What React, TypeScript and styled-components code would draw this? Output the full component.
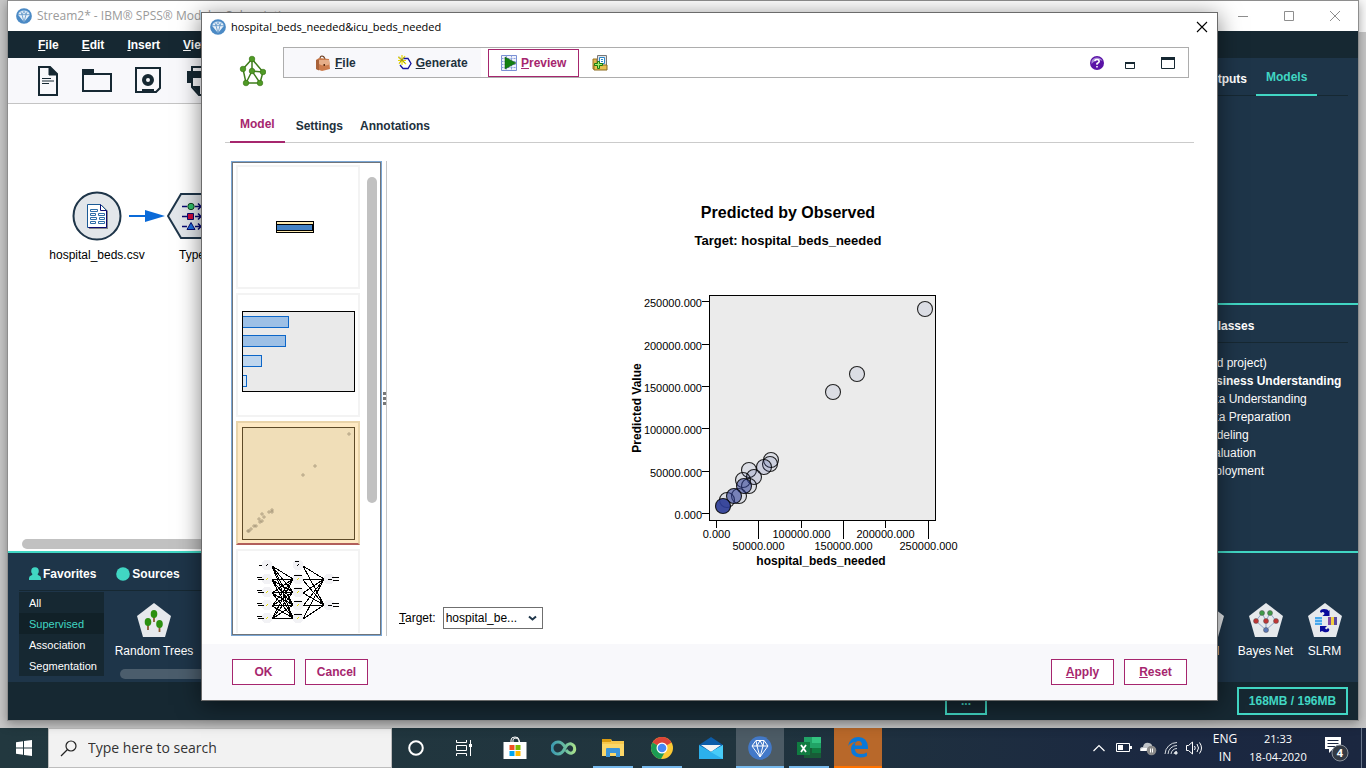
import React from "react";
import styled, { createGlobalStyle, css } from "styled-components";

const c = {
  navy: "#1e3549",
  ink: "#162832",
  inkDeep: "#112128",
  teal: "#41d6c3",
  magenta: "#a6266e",
  panel: "#f8f8fb",
  text: "#22313d",
};
const ui = `"Liberation Sans", Arial, sans-serif`;
const sys = `"Open Sans", "Noto Sans", sans-serif`;

const Global = createGlobalStyle`
  *, *::before, *::after { box-sizing: border-box; }
  body { margin: 0; font-family: ${ui}; font-size: 12px; line-height: 14px; color: #000; }
  button, input, select { font: inherit; color: inherit; margin: 0; }
  button { border: 0; background: none; padding: 0; white-space: nowrap; }
  svg { display: block; flex: none; }
  h1, h2, p, ul { margin: 0; padding: 0; font: inherit; list-style: none; }
`;

const Desktop = styled.div`
  min-height: 100vh;
  display: flex;
  flex-direction: column;
  overflow: hidden;
`;
const Stage = styled.div`
  flex: 1;
  position: relative;
  display: flex;
  background: linear-gradient(#fafafa, #fafafa) right top / 8px 32px no-repeat, #c8c8c8;
`;

/* ---------- main window ---------- */
const MainWindow = styled.div`
  flex: 1;
  min-width: 0;
  margin: 0 7px 7px;
  border: 1px solid #8e8e8e;
  display: flex;
  flex-direction: column;
  background: #fff;
  box-shadow: 0 3px 10px rgba(0, 0, 0, 0.35);
`;
const TitleBar = styled.header<{ $dim?: boolean }>`
  height: ${(p) => (p.$dim ? 30 : 28)}px;
  flex: none;
  display: flex;
  align-items: center;
  gap: 5px;
  padding: 0 ${(p) => (p.$dim ? 14 : 9)}px 0 8px;
  font-family: ${sys};
  font-size: ${(p) => (p.$dim ? 12 : 11)}px;
  line-height: 16px;
  color: ${(p) => (p.$dim ? "#9a9a9a" : "#000")};
  background: #fff;
`;
const TitleText = styled.h1`
  flex: 1;
  white-space: nowrap;
`;
const WindowButtons = styled.div`
  display: flex;
  gap: 32px;
  padding-right: 3px;
`;
const MenuBar = styled.nav`
  height: 27px;
  flex: none;
  display: flex;
  align-items: center;
  gap: 23px;
  padding-left: 30px;
  background: ${c.ink};
  color: #fff;
  font-weight: bold;
  button { font-weight: bold; }
`;
const Work = styled.div`
  flex: 1;
  min-height: 0;
  display: flex;
`;
const CanvasColumn = styled.section`
  flex: 1;
  min-width: 0;
  display: flex;
  flex-direction: column;
`;
const Tools = styled.div`
  height: 46px;
  flex: none;
  display: flex;
  align-items: center;
  gap: 23px;
  padding-left: 29px;
  background: ${c.panel};
  border-bottom: 1px solid #c4c4c4;
`;
const Canvas = styled.div`
  flex: 1;
  position: relative;
`;
const CanvasNode = styled.div<{ $x: number; $y: number }>`
  position: absolute;
  left: ${(p) => p.$x}px;
  top: ${(p) => p.$y}px;
  width: 120px;
  display: flex;
  flex-direction: column;
  align-items: center;
  gap: 7px;
`;
const Arrow = styled.svg`
  position: absolute;
  left: 120px;
  top: 105px;
`;
const ScrollThumb = styled.div<{ $tone: string }>`
  height: 10px;
  border-radius: 5px;
  background: ${(p) => p.$tone};
`;
const CanvasScroll = styled.div`
  padding: 0 14px 2px;
`;

const SidePanel = styled.aside`
  width: 190px;
  flex: none;
  display: flex;
  flex-direction: column;
  background: ${c.navy};
  color: #fff;
`;
const SideTop = styled.div`
  height: 245px;
  flex: none;
`;
const SideTabs = styled.div<{ $pad: number }>`
  display: flex;
  align-items: flex-end;
  height: 38px;
  margin-right: 10px;
  padding-left: ${(p) => p.$pad}px;
  box-shadow: inset 0 -1px 0 ${c.ink};
`;
const SideTab = styled.button<{ $on?: boolean }>`
  font-weight: bold;
  padding: 0 9px 10px 0;
  ${(p) =>
    p.$on &&
    css`
      padding: 0 10px 10px;
      color: ${c.teal};
      border-bottom: 2px solid ${c.teal};
    `}
`;
const SideBottom = styled.div`
  flex: 1;
  border-top: 2px solid ${c.teal};
`;
const Tree = styled.ul`
  padding: 11px 0 0 6px;
  line-height: 18px;
`;
const TreeItem = styled.li<{ $bold?: boolean; $root?: boolean }>`
  padding-left: ${(p) => (p.$root ? 0 : 26)}px;
  font-weight: ${(p) => (p.$bold ? "bold" : "normal")};
  white-space: nowrap;
`;

const Palette = styled.section`
  flex: none;
  border-top: 2px solid ${c.teal};
  background: ${c.navy};
  color: #fff;
  padding: 0 4px 6px 11px;
`;
const PaletteTabs = styled.div`
  height: 38px;
  width: 80%;
  display: flex;
  align-items: center;
  gap: 20px;
  padding: 4px 0 0 10px;
  border-bottom: 1px solid ${c.ink};
`;
const PaletteTab = styled.button`
  display: flex;
  align-items: center;
  gap: 2px;
  font-weight: bold;
`;
const PaletteBody = styled.div`
  display: flex;
  margin-top: 1px;
  gap: 8px;
`;
const Groups = styled.div`
  width: 85px;
  flex: none;
  display: flex;
  flex-direction: column;
  background: ${c.ink};
`;
const Group = styled.button<{ $on?: boolean }>`
  height: 21px;
  padding-left: 10px;
  text-align: left;
  font-size: 11px;
  color: ${(p) => (p.$on ? c.teal : "#fff")};
  background: ${(p) => (p.$on ? c.inkDeep : "transparent")};
`;
const NodeArea = styled.div`
  flex: 1;
  display: flex;
  flex-direction: column;
  justify-content: space-between;
  padding: 10px 0 0;
`;
const NodeStrip = styled.div`
  display: flex;
`;
const PaletteNode = styled.button<{ $w: number; $push?: boolean }>`
  width: ${(p) => p.$w}px;
  margin-left: ${(p) => (p.$push ? "auto" : "0")};
  display: flex;
  flex-direction: column;
  align-items: center;
  gap: 6px;
  font-size: 12px;
`;
const NodeScroll = styled.div`
  width: 80%;
  padding: 0 8px;
  margin-bottom: -3px;
`;
const StatusBar = styled.footer`
  height: 38px;
  flex: none;
  display: flex;
  align-items: center;
  justify-content: flex-end;
  gap: 250px;
  padding-right: 10px;
  background: ${c.ink};
`;
const StatusButton = styled.button<{ $w: number }>`
  width: ${(p) => p.$w}px;
  height: 28px;
  border: 2px solid ${c.teal};
  color: ${c.teal};
  font-weight: bold;
`;

/* ---------- dialog ---------- */
const Dialog = styled.div`
  position: absolute;
  top: 12px;
  left: 201px;
  right: 148px;
  bottom: 27px;
  display: flex;
  flex-direction: column;
  background: #fff;
  border: 1px solid #6b6b6b;
  box-shadow: 0 4px 22px rgba(0, 0, 0, 0.5);
`;
const DialogHead = styled.div`
  height: 62px;
  flex: none;
  display: flex;
  align-items: flex-start;
  gap: 17px;
  padding: 6px 28px 0 37px;
  > svg { margin-top: 8px; }
`;
const ToolBar = styled.div`
  flex: 1;
  height: 31px;
  display: flex;
  align-items: center;
  border: 1px solid #adadad;
  color: ${c.text};
`;
const MenuGroup = styled.div`
  align-self: stretch;
  width: 197px;
  display: flex;
  align-items: center;
  gap: 42px;
  padding-left: 31px;
  background: ${c.panel};
`;
const ToolButton = styled.button<{ $primary?: boolean }>`
  display: flex;
  align-items: center;
  gap: 4px;
  font-weight: bold;
  ${(p) =>
    p.$primary &&
    css`
      height: 28px;
      margin: 0 13px 0 7px;
      padding: 0 12px;
      border: 1px solid ${c.magenta};
      color: ${c.magenta};
    `}
`;
const ToolEnd = styled.div`
  margin-left: auto;
  padding-right: 13px;
  display: flex;
  align-items: center;
`;
const Tabs = styled.div`
  height: 40px;
  flex: none;
  display: flex;
  align-items: flex-end;
  gap: 5px;
  margin: 0 23px;
  padding-left: 5px;
  box-shadow: inset 0 -1px 0 #cbcbcb;
`;
const Tab = styled.button<{ $on?: boolean }>`
  padding: 0 6px 10px;
  font-weight: bold;
  color: ${c.text};
  ${(p) =>
    p.$on &&
    css`
      padding: 0 10px 10px;
      color: ${c.magenta};
      border-bottom: 2px solid ${c.magenta};
    `}
`;
const Split = styled.div`
  flex: 1;
  min-height: 0;
  display: flex;
  margin: 18px 28px 8px 29px;
`;
const Thumbs = styled.div`
  width: 151px;
  flex: none;
  display: flex;
  gap: 7px;
  padding: 2px 3px;
  overflow: hidden;
  border: 1px solid #7aa6d4;
  box-shadow: inset 0 0 0 1px #6f747a;
`;
const ThumbList = styled.div`
  display: flex;
  flex-direction: column;
  gap: 4px;
  padding: 1px 0 0 1px;
  height: 100%;
  overflow: hidden;
`;
const Thumb = styled.button<{ $on?: boolean }>`
  flex: none;
  width: 124px;
  height: 124px;
  border: 2px solid ${(p) => (p.$on ? "#e9d4aa" : "#f3f3f3")};
  border-bottom-color: ${(p) => (p.$on ? "#b25e5a" : "#f3f3f3")};
  background: ${(p) => (p.$on ? "#fee9c3" : "#fff")};
`;
const VThumb = styled.div`
  width: 10px;
  height: 326px;
  margin-top: 13px;
  border-radius: 5px;
  background: #c1c1c1;
`;
const Divider = styled.div`
  width: 5px;
  flex: none;
  display: flex;
  flex-direction: column;
  align-items: flex-start;
  justify-content: center;
  gap: 2px;
  padding-left: 1px;
  border-right: 1px solid #c6c6c6;
  i { width: 3px; height: 3px; background: #777; }
`;
const Viewer = styled.section`
  flex: 1;
  min-width: 0;
  display: flex;
  flex-direction: column;
`;
const ChartTitle = styled.h2`
  margin-top: 43px;
  text-align: center;
  font-size: 16px;
  line-height: 18px;
  font-weight: bold;
`;
const ChartSub = styled.p`
  margin-top: 11px;
  text-align: center;
  font-size: 13px;
  line-height: 16px;
  font-weight: bold;
`;
const ChartSvg = styled.svg`
  align-self: center;
  margin-top: 36px;
  font-family: ${ui};
  font-size: 11px;
`;
const AxisTitle = styled.text`
  font-size: 12px;
  font-weight: bold;
  text-anchor: middle;
`;
const TargetRow = styled.div`
  margin-top: auto;
  padding: 0 0 7px 12px;
  display: flex;
  align-items: center;
  gap: 7px;
`;
const SelectBox = styled.div`
  display: grid;
  width: 100px;
  > * { grid-area: 1 / 1; }
  svg { align-self: center; justify-self: end; margin-right: 6px; pointer-events: none; }
`;
const Select = styled.select`
  appearance: none;
  height: 22px;
  padding: 0 2px;
  border: 1px solid #6f6f6f;
  border-radius: 0;
  background: #fff;
`;
const DialogFoot = styled.footer`
  height: 56px;
  flex: none;
  display: flex;
  align-items: center;
  gap: 10px;
  padding: 0 30px;
  background: ${c.panel};
`;
const FootButton = styled.button<{ $push?: boolean }>`
  width: 63px;
  height: 26px;
  margin-left: ${(p) => (p.$push ? "auto" : "0")};
  border: 1px solid ${c.magenta};
  background: #fff;
  color: ${c.magenta};
  font-weight: bold;
`;

/* ---------- taskbar ---------- */
const TaskBar = styled.footer`
  height: 40px;
  flex: none;
  display: flex;
  background: linear-gradient(90deg, #22383f, #20343e 55%, #1b2841 85%, #1b2740);
  color: #fff;
  font-family: ${sys};
`;
const TaskButton = styled.button<{ $bg?: string; $line?: string; $lineW?: number }>`
  width: 48px;
  display: grid;
  place-items: center;
  background: ${(p) =>
    p.$line
      ? `linear-gradient(${p.$line}, ${p.$line}) center bottom / ${p.$lineW ?? 40}px 2px no-repeat, ${p.$bg ?? "transparent"}`
      : "none"};
`;
const Search = styled.label`
  width: 344px;
  display: flex;
  align-items: center;
  gap: 11px;
  padding-left: 11px;
  background: #f2f2f2;
  border: 1px solid #bdbdbd;
`;
const SearchInput = styled.input`
  flex: 1;
  min-width: 0;
  border: 0;
  padding: 0;
  outline: 0;
  background: none;
  font-size: 14px;
  line-height: 20px;
  color: #333;
  &::placeholder { color: #333; opacity: 1; }
`;
const Apps = styled.div`
  display: flex;
  gap: 1px;
  margin-left: 3px;
`;
const Tray = styled.div`
  margin-left: auto;
  display: flex;
  align-items: center;
  gap: 7px;
  font-size: 12px;
  line-height: 18px;
`;
const TrayText = styled.div<{ $w: number; $small?: boolean }>`
  width: ${(p) => p.$w}px;
  text-align: center;
  font-size: ${(p) => (p.$small ? 11 : 12)}px;
`;
const ShowDesktop = styled.div`
  width: 5px;
  align-self: stretch;
  border-left: 1px solid #68758a;
`;

/* ---------- drawings ---------- */
const Gem = ({ size = 16, flat }: { size?: number; flat?: boolean }) => (
  <svg width={size} height={size} viewBox="0 0 24 24">
    <circle cx="12" cy="12" r="11.8" fill={flat ? "#4379c8" : "#4b8ac5"} />
    {!flat && <path d="M3 9A10 10 0 0 1 21 9Q12 3 3 9" fill="#9cc3e6" />}
    {flat ? (
      <path d="M8 4.5h8l4 5.5-8 11-8-11zM4 10h16M8 4.5 9 10l3 11 3-11 1-5.500M9 10l3-5.500 3 5.500" fill="none" stroke="#fff" strokeWidth="1" />
    ) : (
      <>
        <path d="M7 5h10l4 5-9 11L3 10z" fill="#e8f1f9" />
        <path d="M3 10h18M9 10l3 11 3-11-3-5zM7 5l2 5M17 5l-2 5" fill="none" stroke="#5c93c6" strokeWidth="1.2" />
      </>
    )}
  </svg>
);

const WinControls = () => (
  <WindowButtons>
    <button aria-label="Minimize">
      <svg width="12" height="12" viewBox="0 0 12 12"><path d="M1 6.500h10" stroke="#8e8e8e" /></svg>
    </button>
    <button aria-label="Maximize">
      <svg width="16" height="12" viewBox="0 0 16 12"><path d="M3.500 1.500h9v9h-9z" fill="none" stroke="#8e8e8e" /></svg>
    </button>
    <button aria-label="Close">
      <svg width="12" height="12" viewBox="0 0 12 12"><path d="m1 1 10 10M11 1 1 11" stroke="#8e8e8e" /></svg>
    </button>
  </WindowButtons>
);

const NewDoc = () => (
  <svg width="22" height="32" viewBox="0 0 22 32" fill="none" stroke={c.ink}>
    <path d="M2 2h11l7 7v21H2z" strokeWidth="2" />
    <path d="M12 2v8h8z" fill={c.ink} />
    <path d="M5 13.500h9M5 16h12M5 18.500h7" />
  </svg>
);
const Folder = () => (
  <svg width="30" height="24" viewBox="0 0 30 24">
    <path d="M1 5h28v17H1z" fill="none" stroke={c.ink} strokeWidth="2" />
    <path d="M0 0h12v5H0z" fill={c.ink} />
  </svg>
);
const Disk = () => (
  <svg width="28" height="28" viewBox="0 0 28 28">
    <path d="M1 1h24v20l-4 4H1z" fill="none" stroke={c.ink} strokeWidth="2" />
    <circle cx="13" cy="13" r="4" fill="none" stroke={c.ink} strokeWidth="4" />
    <path d="M7 22h12v3H7z" fill={c.ink} />
  </svg>
);
const Printer = () => (
  <svg width="30" height="32" viewBox="0 0 30 32">
    <path d="M6 9V2h18v7" fill="none" stroke={c.ink} strokeWidth="2" />
    <path d="M1 6h28v12h-4v-5H5v5H1z" fill={c.ink} />
    <path d="M6 13v9l7 8h12V13" fill="none" stroke={c.ink} strokeWidth="2" />
    <path d="M6 21h8v9z" fill={c.ink} />
  </svg>
);

const SourceNode = () => (
  <svg width="50" height="50" viewBox="0 0 50 50">
    <circle cx="25" cy="25" r="23.500" fill="#e2e6ea" stroke={c.navy} strokeWidth="2" />
    <path d="M17 14h13l6 6v18H17z" fill="#888" />
    <path d="M15.500 13.500h13l6 6v17h-19z" fill="#fff" stroke="#1a5a96" />
    <path d="M28.500 13.500v6h6v17h-18" fill="none" stroke="#0a0a70" />
    <path d="M18.500 18.500h7v2h-7zM18.500 22.500h5v2h-5zM26.500 22.500h6v2h-6zM18.500 26.500h6v2h-6zM27.500 26.500h5v2h-5zM18.500 30.500h5v2h-5zM26.500 30.500h6v2h-6z" fill="none" stroke="#2f6ea8" />
  </svg>
);
const TypeNode = () => (
  <svg width="50" height="50" viewBox="0 0 50 50">
    <path d="M1 25 14 3h24l11 22-11 22H14z" fill="#e2e6ea" stroke={c.navy} strokeWidth="2" />
    <path d="M15 15.500h5M28 15.500h6m-3-3 3 3-3 3M15 25.500h5M28 25.500h6m-3-3 3 3-3 3M15 35.500h5M28 35.500h6m-3-3 3 3-3 3" fill="none" stroke="#0a0a70" strokeWidth="1.500" />
    <circle cx="24" cy="15.500" r="3.200" fill="#2fc06a" stroke="#10401c" />
    <path d="M20.500 22.500h6v6h-6z" fill="#d00a3c" stroke="#0a0a70" />
    <path d="m24 31.500 4 7h-8z" fill="#1c6fe0" stroke="#0a0a70" />
  </svg>
);

const Pentagon = ({ children }: { children: React.ReactNode }) => (
  <svg width="36" height="36" viewBox="0 0 36 36">
    <path d="M18 1 35 14 29 35H7L1 14z" fill="#e6e9ec" />
    {children}
  </svg>
);
const Trees = () => (
  <Pentagon>
    {[[18, 12], [12, 20], [23.5, 22]].map(([x, y]) => (
      <g key={x}>
        <path d={`M${x} ${y}v8`} stroke="#8a5a30" strokeWidth="1.800" />
        <ellipse cx={x} cy={y} rx="3.300" ry="4" fill="#2c9010" />
      </g>
    ))}
  </Pentagon>
);
const Bayes = () => (
  <Pentagon>
    <path d="M14 11 8 19l10 9 10-9-6-8-4 8-4-8M18 19v9" fill="none" stroke="#8fa5c8" />
    <g stroke="#555" strokeWidth=".5">
      <circle cx="14" cy="11" r="2.500" fill="#3f9a48" /><circle cx="22" cy="11" r="2.500" fill="#3f9a48" />
      <circle cx="8" cy="19" r="2.500" fill="#c03434" /><circle cx="18" cy="19" r="2.500" fill="#c03434" /><circle cx="28" cy="19" r="2.500" fill="#c03434" />
      <circle cx="18" cy="28" r="2.500" fill="#5876b8" />
    </g>
  </Pentagon>
);
const Slrm = () => (
  <Pentagon>
    <path d="M8 15h7v8H8z" fill="#48a8ec" />
    <path d="M8 17.500h7M8 20.500h7" stroke="#a5d6fa" />
    <path d="M21 15h3v8h-3z" fill="#8048a8" /><path d="M24 15h3v8h-3z" fill="#f0d040" /><path d="M27 15h3v8h-3z" fill="#5a48a0" />
    <path d="M13 10q0-3 4-3 4 0 4.500 2l1-1v6h-7l2-2q0-2-2-2-1 0-1 1zM13 24h7l-2 2q1 2 2 1l1-1q2 1 1 3-2 2-5 1l-2-1-2 1z" fill="#0a0a9a" />
  </Pentagon>
);
const Plain = () => (
  <Pentagon><path d="M9 22 27 14" stroke="#888" /></Pentagon>
);

const NetIcon = () => {
  const p = [[13, 4], [4, 14], [24, 17], [13, 16], [7, 28], [21, 28]];
  return (
    <svg width="27" height="32" viewBox="0 0 27 32">
      <path d="M13 4 4 14l3 14h14l3-11zM13 4v12M13 16l11 1M13 16 7 28M13 16l8 12" fill="none" stroke="#3f7d1c" strokeWidth="1.500" />
      {p.map(([x, y]) => (
        <circle key={`${x}-${y}`} cx={x} cy={y} r="2.800" fill="#4f9a26" stroke="#34700f" strokeWidth=".6" />
      ))}
    </svg>
  );
};
const Bag = () => (
  <svg width="16" height="16" viewBox="0 0 16 16">
    <path d="M5 4Q5 1 7 1t3 3" fill="none" stroke="#6b3a1c" strokeWidth="1.200" />
    <path d="M1 5 4 3l10 1 1 10-8 2-6-2z" fill="#cc7c4c" />
    <path d="M4 5h10l1 4q-6 3-11 0z" fill="#e6ae88" />
    <path d="M1 5 4 4.500v11L1 14z" fill="#a8623a" />
    <path d="M8.500 9h1.500v2H8.500z" fill="#5b2c10" />
  </svg>
);
const GenIcon = () => (
  <svg width="14" height="16" viewBox="0 0 14 16">
    <path d="M5 3.500h5l3 5-3 5H5l-3-3.500" fill="#fff" stroke="#1414a0" strokeWidth="1.300" />
    <path d="M0 2l8 7M7 1 1 9M4 0v10M0 5.500h8" stroke="#e8d800" strokeWidth="1.200" />
    <path d="M1 1.500 7 8M6.500 2 1.500 7.500" stroke="#555" strokeWidth=".6" />
  </svg>
);
const PreviewIcon = () => (
  <svg width="16" height="16" viewBox="0 0 16 16">
    <path d="M.5.500h15v15H.5z" fill="#eef2fc" stroke="#7a90d4" />
    <path d="M.5 3.500h15M.5 6.500h15M.5 9.500h15M.5 12.500h15M5.500.500v15M10.500.500v15" stroke="#8ca0dc" strokeDasharray="2 1" />
    <path d="M4 2v12l11-6z" fill="#128012" stroke="#0a500a" strokeWidth=".5" />
  </svg>
);
const AddIcon = () => (
  <svg width="17" height="17" viewBox="0 0 17 17">
    <path d="M1 5h4v10H1z" fill="#e0b450" stroke="#9a7420" />
    <path d="M5.500 1.500h9V15h-9z" fill="#e4e4e8" stroke="#777" />
    <path d="M7.500 3.500h5v6h-5z" fill="#fff" stroke="#2a88c8" />
    <path d="M9 5.500h2M9 7.500h2" stroke="#2a88c8" />
    <path d="M2 11h13v5H2z" fill="#e8c050" stroke="#8a6a1c" />
    <path d="M5.500 7.500h2v2h3v2h-3v3h-2v-3h-3v-2h3z" fill="#a0f070" stroke="#1c7a10" />
  </svg>
);
const Help = () => (
  <svg width="14" height="14" viewBox="0 0 14 14">
    <circle cx="7" cy="7" r="7" fill="#5a12a6" />
    <path d="M1.500 5A6 6 0 0 1 12.500 5Q7 2 1.500 8z" fill="#a888d8" />
    <path d="M4.800 5.200Q5 3.500 7 3.500t2.200 1.700Q9.200 6.500 7 7.500v1.200M7 10v1.600" fill="none" stroke="#fff" strokeWidth="1.600" />
  </svg>
);

/* ---------- thumbnails ---------- */
const T = ({ children }: { children: React.ReactNode }) => (
  <svg width="120" height="120" viewBox="0 0 120 120" shapeRendering="crispEdges">{children}</svg>
);
const SummaryThumb = () => (
  <T>
    <path d="M38.500 54.500h37v11h-37z" fill="#fdeab0" stroke="#000" />
    <path d="M38.500 57.500h36v6h-36z" fill="#4583c4" stroke="#000" />
  </T>
);
const BarsThumb = () => (
  <T>
    <path d="M4.500 16.500h112v80H4.500z" fill="#eaeaea" />
    {[[21, 46, "#9dc0e6"], [40, 43, "#9dc0e6"], [60, 19, "#bfd6ee"], [80, 4, "#d8e6f4"]].map(([y, w, f]) => (
      <rect key={y} x="4.500" y={Number(y) + 0.5} width={w} height="11" fill={String(f)} stroke="#0c66c8" />
    ))}
    <path d="M4.500 16.500h112v80H4.500z" fill="none" stroke="#000" />
  </T>
);
const scatter = [[111, 11], [77, 43], [65, 52], [34, 87], [34, 89], [31, 89], [24, 91], [26, 94], [21, 96], [22, 99], [24, 98], [18, 103], [16, 103], [13, 106], [10, 108], [11, 108]];
const ScatterThumb = () => (
  <T>
    <path d="M4.500 4.500h112v112H4.500z" fill="#f0deb8" stroke="#5d4a28" />
    {scatter.map(([x, y], i) => (
      <circle key={i} cx={x} cy={y} r="1.300" fill="#a89878" fillOpacity=".35" stroke="#8f8068" strokeOpacity=".55" strokeWidth=".8" shapeRendering="auto" />
    ))}
  </T>
);
const rows = [14, 28, 41, 54, 67];
const NetThumb = () => (
  <T>
    <g stroke="#000">
      {rows.map((a) => rows.slice(1).map((b) => <path key={`${a}-${b}`} d={`M34 ${a + 1}L55 ${b}`} />))}
      {rows.map((a) => [28, 54].map((b) => <path key={`${a}-${b}`} d={`M65 ${a + 1}L86 ${b}`} />))}
    </g>
    <g fill="#f2f2f5">
      {[29, 60].map((x) => rows.map((y) => <circle key={`${x}-${y}`} cx={x} cy={y} r="5.500" />))}
      {[28, 54].map((y) => <circle key={y} cx="91" cy={y} r="5.500" />)}
    </g>
    <g stroke="#000">
      {rows.map((y) => (
        <path key={y} d={y === 14 ? "M21 14.500h3M28 15l2-2M57 10.500h4M59 15l2-2" : `M19 ${y - 1.5}h5M20 ${y + 0.5}h6M56 ${y - 3.5}h8`} />
      ))}
      {[28, 54].map((y) => <path key={y} d={`M90 ${y}h4M94 ${y - 1.5}h7M95 ${y + 1.5}h6`} />)}
    </g>
    {rows.slice(1).map((y) => (
      <path key={y} d={`M28 ${y + 1}l2-2M59 ${y + 1}l2-2`} stroke="#e4dc00" />
    ))}
  </T>
);

/* ---------- scatter plot ---------- */
const points: [number, number, number][] = [
  [307, 24, 1], [239, 89, 1], [215, 107, 1], [153, 175, 1], [152, 179, 1], [146, 182, 2],
  [131, 185, 1], [136, 192, 2], [125, 195, 1], [131, 201, 1], [121, 211, 1], [126, 201, 6],
  [109, 215, 1], [116, 211, 7], [105, 221, 26],
];
const Chart = () => (
  <ChartSvg width="342" height="290" viewBox="-1 0 342 290" role="img" aria-label="Predicted value against observed value">
    <rect x="91.500" y="10.500" width="226" height="225" fill="#ebebeb" stroke="#000" />
    {["250000.000", "200000.000", "150000.000", "100000.000", "50000.000", "0.000"].map((t, i) => {
      const y = [16.5, 59.5, 101.5, 143.5, 186.5, 228.5][i];
      return (
        <g key={t}>
          <path d={`M84 ${y}h7`} stroke="#000" />
          <text x="84" y={y + 5} textAnchor="end">{t}</text>
        </g>
      );
    })}
    {["0.000", "50000.000", "100000.000", "150000.000", "200000.000", "250000.000"].map((t, i) => {
      const x = [98.5, 140.5, 183.5, 225.5, 267.5, 310.5][i];
      const low = i % 2 === 1;
      return (
        <g key={t}>
          <path d={`M${x} 236v${low ? 18 : 7}`} stroke="#000" />
          <text x={x} y={low ? 265 : 253} textAnchor="middle">{t}</text>
        </g>
      );
    })}
    {points.map(([x, y, n], i) => (
      <circle key={i} cx={x} cy={y} r="7.500" fill="#2b3a94" fillOpacity={1 - Math.pow(0.92, n + (n > 2 ? 3 : 0))} stroke="#000" strokeOpacity=".85" strokeWidth="1.100" />
    ))}
    <AxisTitle x="203" y="280">hospital_beds_needed</AxisTitle>
    <AxisTitle transform="translate(23 123) rotate(-90)">Predicted Value</AxisTitle>
  </ChartSvg>
);

/* ---------- taskbar icons ---------- */
const taskIcons = {
  store: (
    <svg width="24" height="24" viewBox="0 0 24 24">
      <path d="M8 7V4q0-3 4-3t4 3v3M10 7V4q0-2 3-2t4 5" fill="none" stroke="#fff" />
      <path d="M.5 6h23v17H.5z" fill="#fff" />
      <path d="M6.500 9h5v5h-5z" fill="#f25022" /><path d="M12.500 9h5v5h-5z" fill="#7fba00" />
      <path d="M6.500 15h5v5h-5z" fill="#00a4ef" /><path d="M12.500 15h5v5h-5z" fill="#ffb900" />
    </svg>
  ),
  loop: (
    <svg width="26" height="16" viewBox="0 0 26 16">
      <defs><linearGradient id="loop"><stop offset="0" stopColor="#3c9ab0" /><stop offset=".6" stopColor="#6cc0a0" /><stop offset="1" stopColor="#a8e08c" /></linearGradient></defs>
      <path d="M14 7Q11 2 7 2a6 6 0 0 0 0 12q4 0 7-6l2-3q4-3 7 1 2 5-2 7-3 1-6-3" fill="none" stroke="url(#loop)" strokeWidth="3" />
    </svg>
  ),
  files: (
    <svg width="24" height="22" viewBox="0 0 24 22">
      <path d="M1 2h9l1 2h12v15H1z" fill="#f8c84c" /><path d="M1 2h9v3H1z" fill="#dc9c10" />
      <path d="M1 7h22v12H1z" fill="#fcd768" />
      <path d="M5 20v-8q0-1 1-1h12q1 0 1 1v8h-4v-4H9v4z" fill="#3c94d8" />
    </svg>
  ),
  chrome: (
    <svg width="24" height="24" viewBox="0 0 24 24">
      <circle cx="12" cy="12" r="11" fill="#fbc934" />
      <path d="M12 12 2.500 6.500a11 11 0 0 1 19 0z" fill="#dc4438" />
      <path d="M12 12 2.500 6.500A11 11 0 0 0 11 23l5-9z" fill="#1c9c54" />
      <circle cx="12" cy="12" r="5.500" fill="#fff" /><circle cx="12" cy="12" r="4.300" fill="#4688f4" />
    </svg>
  ),
  mail: (
    <svg width="24" height="24" viewBox="0 0 24 24">
      <path d="m0 9 12-8 12 8v6H0z" fill="#0c5ca8" /><path d="M2 9h20l-10 7z" fill="#f4f4f4" />
      <path d="M0 9v14h24V9l-12 7z" fill="#2cb0ec" /><path d="M24 9v14L9 14.500l3 1.500z" fill="#48ccf8" />
    </svg>
  ),
  excel: (
    <svg width="24" height="22" viewBox="0 0 24 22">
      <path d="M7 0h17v21H7z" fill="#21a366" /><path d="M15 0h9v6h-9z" fill="#33c481" />
      <path d="M7 11h17v10H7z" fill="#185c37" /><path d="M15 11h9v5h-9z" fill="#107c41" />
      <path d="M0 5h13v13H0z" fill="#107c41" />
      <path d="m4 8 5 7M9 8l-5 7" stroke="#fff" strokeWidth="1.800" />
    </svg>
  ),
  edge: (
    <svg width="22" height="24" viewBox="0 0 22 24">
      <path d="M1 10Q3 1 11.500 1T21 11v2H8q0 5 6 5 3 0 6-1.500V20q-3 1.500-7 1.500Q4 21 4 13q0-5 5-7-5 0-8 4zM8 9.500h7Q15 5 11.500 5T8 9.500" fill="#0a78d8" fillRule="evenodd" />
    </svg>
  ),
};

const blue = "#76b9ed";

export default function App() {
  return (
    <Desktop>
      <Global />
      <Stage>
        <MainWindow>
          <TitleBar $dim>
            <Gem />
            <TitleText>Stream2* - IBM® SPSS® Modeler Subscription</TitleText>
            <WinControls />
          </TitleBar>
          <MenuBar>
            <button><u>F</u>ile</button>
            <button><u>E</u>dit</button>
            <button><u>I</u>nsert</button>
            <button><u>V</u>iew</button>
          </MenuBar>
          <Work>
            <CanvasColumn>
              <Tools>
                <button aria-label="New"><NewDoc /></button>
                <button aria-label="Open"><Folder /></button>
                <button aria-label="Save"><Disk /></button>
                <button aria-label="Print"><Printer /></button>
              </Tools>
              <Canvas>
                <Arrow width="38" height="14" viewBox="0 0 38 14">
                  <path d="M1 7h18" stroke="#0a6ad8" strokeWidth="2" />
                  <path d="M17 1l20 6-20 6z" fill="#0a6ad8" />
                </Arrow>
                <CanvasNode $x={29} $y={87}>
                  <SourceNode />
                  <span>hospital_beds.csv</span>
                </CanvasNode>
                <CanvasNode $x={124} $y={87}>
                  <TypeNode />
                  <span>Type</span>
                </CanvasNode>
              </Canvas>
              <CanvasScroll><ScrollThumb $tone="#c1c1c1" /></CanvasScroll>
            </CanvasColumn>
            <SidePanel>
              <SideTop>
                <SideTabs $pad={33}>
                  <SideTab>Outputs</SideTab>
                  <SideTab $on>Models</SideTab>
                </SideTabs>
              </SideTop>
              <SideBottom>
                <SideTabs $pad={41}>
                  <SideTab>Classes</SideTab>
                </SideTabs>
                <Tree>
                  <TreeItem $root>(unsaved project)</TreeItem>
                  <TreeItem $bold>Business Understanding</TreeItem>
                  <TreeItem>Data Understanding</TreeItem>
                  <TreeItem>Data Preparation</TreeItem>
                  <TreeItem>Modeling</TreeItem>
                  <TreeItem>Evaluation</TreeItem>
                  <TreeItem>Deployment</TreeItem>
                </Tree>
              </SideBottom>
            </SidePanel>
          </Work>
          <Palette>
            <PaletteTabs>
              <PaletteTab>
                <svg width="12" height="14" viewBox="0 0 12 14">
                  <circle cx="6" cy="4" r="3.800" fill={c.teal} />
                  <path d="M4 6h4l1 2q3 1 3 3v2H0v-2q0-2 3-3z" fill={c.teal} />
                </svg>
                Favorites
              </PaletteTab>
              <PaletteTab>
                <svg width="14" height="14" viewBox="0 0 14 14"><circle cx="7" cy="7" r="6.800" fill={c.teal} /></svg>
                Sources
              </PaletteTab>
            </PaletteTabs>
            <PaletteBody>
              <Groups>
                <Group>All</Group>
                <Group $on>Supervised</Group>
                <Group>Association</Group>
                <Group>Segmentation</Group>
              </Groups>
              <NodeArea>
                <NodeStrip>
                  <PaletteNode $w={84}><Trees />Random Trees</PaletteNode>
                  <PaletteNode $w={59} $push><Plain />SVM</PaletteNode>
                  <PaletteNode $w={59}><Bayes />Bayes Net</PaletteNode>
                  <PaletteNode $w={59}><Slrm />SLRM</PaletteNode>
                </NodeStrip>
                <NodeScroll><ScrollThumb $tone="#4b5d6c" /></NodeScroll>
              </NodeArea>
            </PaletteBody>
          </Palette>
          <StatusBar>
            <StatusButton $w={42}>...</StatusButton>
            <StatusButton $w={111}>168MB / 196MB</StatusButton>
          </StatusBar>
        </MainWindow>

        <Dialog role="dialog" aria-label="hospital_beds_needed&icu_beds_needed">
          <TitleBar>
            <Gem />
            <TitleText>hospital_beds_needed&amp;icu_beds_needed</TitleText>
            <button aria-label="Close">
              <svg width="12" height="12" viewBox="0 0 12 12"><path d="m1 1 10 10M11 1 1 11" stroke="#000" strokeWidth="1.100" /></svg>
            </button>
          </TitleBar>
          <DialogHead>
            <NetIcon />
            <ToolBar>
              <MenuGroup>
                <ToolButton><Bag /><span><u>F</u>ile</span></ToolButton>
                <ToolButton><GenIcon /><span><u>G</u>enerate</span></ToolButton>
              </MenuGroup>
              <ToolButton $primary><PreviewIcon /><span><u>P</u>review</span></ToolButton>
              <ToolButton aria-label="Add to palette"><AddIcon /></ToolButton>
              <ToolEnd>
                <button aria-label="Help"><Help /></button>
                <button aria-label="Collapse">
                  <svg width="52" height="16" viewBox="0 0 52 16"><path d="M21.500 8.500h9v5h-9z" fill="#fff" stroke={c.ink} /><path d="M21 7h10v2H21z" fill={c.ink} /></svg>
                </button>
                <button aria-label="Expand">
                  <svg width="19" height="14" viewBox="0 0 19 14"><path d="M5.500 1.500h13v11h-13z" fill="#fff" stroke={c.ink} /><path d="M5 1h14v3H5z" fill={c.ink} /></svg>
                </button>
              </ToolEnd>
            </ToolBar>
          </DialogHead>
          <Tabs>
            <Tab $on>Model</Tab>
            <Tab>Settings</Tab>
            <Tab>Annotations</Tab>
          </Tabs>
          <Split>
            <Thumbs>
              <ThumbList>
                <Thumb aria-label="Model summary"><SummaryThumb /></Thumb>
                <Thumb aria-label="Predictor importance"><BarsThumb /></Thumb>
                <Thumb $on aria-label="Predicted by observed"><ScatterThumb /></Thumb>
                <Thumb aria-label="Network"><NetThumb /></Thumb>
              </ThumbList>
              <VThumb />
            </Thumbs>
            <Divider><i /><i /><i /></Divider>
            <Viewer>
              <ChartTitle>Predicted by Observed</ChartTitle>
              <ChartSub>Target: hospital_beds_needed</ChartSub>
              <Chart />
              <TargetRow>
                <label htmlFor="target"><u>T</u>arget:</label>
                <SelectBox>
                  <Select id="target"><option>hospital_be...</option></Select>
                  <svg width="9" height="7" viewBox="0 0 9 7"><path d="m1 1.500 3.500 3L8 1.500" fill="none" stroke={c.navy} strokeWidth="2" /></svg>
                </SelectBox>
              </TargetRow>
            </Viewer>
          </Split>
          <DialogFoot>
            <FootButton>OK</FootButton>
            <FootButton>Cancel</FootButton>
            <FootButton $push><u>A</u>pply</FootButton>
            <FootButton><u>R</u>eset</FootButton>
          </DialogFoot>
        </Dialog>
      </Stage>

      <TaskBar>
        <TaskButton aria-label="Start">
          <svg width="16" height="16" viewBox="0 0 16 16"><path d="M0 2.200 7 1.200V7.500H0zM8 1l8-1v7.500H8zM0 8.500h7v6.300l-7-1zM8 8.500h8V16l-8-1z" fill="#fff" /></svg>
        </TaskButton>
        <Search>
          <svg width="17" height="17" viewBox="0 0 17 17"><circle cx="11" cy="6" r="5" fill="none" stroke="#222" strokeWidth="1.200" /><path d="M7.500 9.500 1 16" stroke="#222" strokeWidth="1.200" /></svg>
          <SearchInput placeholder="Type here to search" aria-label="Search" />
        </Search>
        <TaskButton aria-label="Cortana">
          <svg width="16" height="16" viewBox="0 0 16 16"><circle cx="8" cy="8" r="6.800" fill="none" stroke="#fff" strokeWidth="2" /></svg>
        </TaskButton>
        <TaskButton aria-label="Task view">
          <svg width="16" height="16" viewBox="0 0 16 16"><path d="M.5 0v2.500h10V0M.5 5.500h10v5H.5zM.5 16v-2.500h10V16M14.500 0v16" fill="none" stroke="#fff" /><path d="M13 4h3v3h-3z" fill="#fff" /></svg>
        </TaskButton>
        <Apps>
          <TaskButton aria-label="Store">{taskIcons.store}</TaskButton>
          <TaskButton aria-label="Loop">{taskIcons.loop}</TaskButton>
          <TaskButton aria-label="File Explorer" $line={blue}>{taskIcons.files}</TaskButton>
          <TaskButton aria-label="Chrome" $line={blue}>{taskIcons.chrome}</TaskButton>
          <TaskButton aria-label="Mail">{taskIcons.mail}</TaskButton>
          <TaskButton aria-label="SPSS Modeler" $line={blue} $lineW={48} $bg="#4c5b65"><Gem size={24} flat /></TaskButton>
          <TaskButton aria-label="Excel" $line={blue}>{taskIcons.excel}</TaskButton>
          <TaskButton aria-label="Edge" $line="#ff7300" $lineW={48} $bg="#b8682a">{taskIcons.edge}</TaskButton>
        </Apps>
        <Tray>
          <svg width="14" height="10" viewBox="0 0 14 10"><path d="m1.500 8 5.500-5.500L12.500 8" fill="none" stroke="#fff" strokeWidth="1.200" /></svg>
          <svg width="20" height="12" viewBox="0 0 20 12"><path d="M3.500 1.500h13v8h-13z" fill="none" stroke="#fff" /><path d="M5 3h5v5H5zM17 4h2v3h-2z" fill="#fff" /></svg>
          <svg width="17" height="16" viewBox="0 0 17 16">
            <path d="M0 11Q-1 7 3 7q1-5 6-4 4 1 3 5v3z" fill="#c0c4c8" /><path d="M1 11Q0 8 4 8h6v3z" fill="#fff" />
            <circle cx="11.500" cy="10.500" r="4.800" fill="#8a8a8a" /><path d="M10.500 8.500v4M12.500 8.500v4" stroke="#fff" />
          </svg>
          <svg width="14" height="14" viewBox="0 0 14 14" fill="none" stroke="#d8dde2">
            <path d="M1 13A12 12 0 0 1 13 1.500M4 13a9 9 0 0 1 9-8.500M7 13a6 6 0 0 1 6-5.500M10 13a3 3 0 0 1 3-2.500" /><path d="M11 11h2v2h-2z" fill="#fff" />
          </svg>
          <svg width="18" height="14" viewBox="0 0 18 14" fill="none" stroke="#fff">
            <path d="M1.500 4.500h2l4-3.500v12l-4-3.500h-2zM9.500 5q1.500 2 0 4M12 3q3 4 0 8M14.500 1.500q4 5.500 0 11" />
          </svg>
          <TrayText $w={30}>ENG<br />IN</TrayText>
          <TrayText $w={62} $small>21:33<br />18-04-2020</TrayText>
          <svg width="38" height="30" viewBox="0 0 38 30">
            <path d="M9 4h16v12H17l-4 4v-4H9z" fill="#fff" /><path d="M11.500 7.500h11M11.500 10.500h11M11.500 13.500h8" stroke="#1b2740" />
            <circle cx="24" cy="20" r="8" fill="#333a44" stroke="#8a929c" />
            <text x="24" y="24" textAnchor="middle" fontSize="11" fontWeight="bold" fill="#fff">4</text>
          </svg>
          <ShowDesktop />
        </Tray>
      </TaskBar>
    </Desktop>
  );
}
